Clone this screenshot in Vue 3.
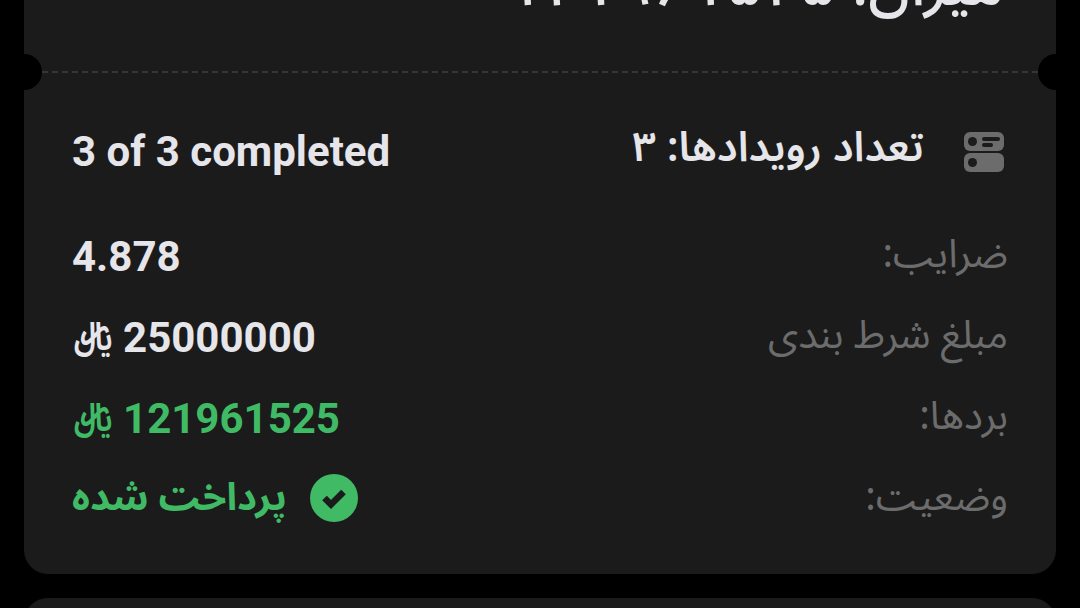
<script setup>
const rows = [
  { label: 'ضرایب:', value: '4.878', tone: '' },
  { label: 'مبلغ شرط بندی', value: '25000000', tone: '', rial: true },
  { label: 'بردها:', value: '121961525', tone: 'green', rial: true },
]
</script>

<template>
  <div class="page" dir="rtl">
    <section class="card">
      <div class="head">
        <div class="title">میزان: <span class="digits">۱۲۱۹۶۱۵۲۵</span></div>
      </div>
      <div class="divider">
        <span class="notch notch-r"></span>
        <span class="dash"></span>
        <span class="notch notch-l"></span>
      </div>
      <div class="body">
        <div class="summary">
          <div class="count">
            <svg class="stack" width="40" height="40" viewBox="0 0 40 40">
              <rect x="0" y="0" width="40" height="19" rx="6" fill="#6c6c6c" />
              <rect x="0" y="21" width="40" height="19" rx="6" fill="#6c6c6c" />
              <circle cx="8.5" cy="9.5" r="4.5" fill="#1b1b1b" />
              <circle cx="8.5" cy="30.5" r="4.5" fill="#1b1b1b" />
              <rect x="18" y="5" width="18" height="4" rx="2" fill="#1b1b1b" />
              <rect x="18" y="11" width="11" height="4" rx="2" fill="#1b1b1b" />
            </svg>
            <span class="count-text">تعداد رویدادها: ۳</span>
          </div>
          <div class="completed" dir="ltr">3 of 3 completed</div>
        </div>
        <div v-for="row in rows" :key="row.label" class="row">
          <span class="label">{{ row.label }}</span>
          <span class="value" :class="row.tone" dir="ltr">
            <span v-if="row.rial" class="rial" dir="rtl">﷼</span>
            <span>{{ row.value }}</span>
          </span>
        </div>
        <div class="row">
          <span class="label">وضعیت:</span>
          <span class="status">
            <svg width="48" height="48" viewBox="0 0 48 48">
              <circle cx="24" cy="24" r="24" fill="#40ba65" />
              <path d="M14.5 24 L21 30.5 L33.5 18" fill="none" stroke="#1b1b1b" stroke-width="6.5" />
            </svg>
            <span>پرداخت شده</span>
          </span>
        </div>
      </div>
    </section>
    <section class="card next"></section>
  </div>
</template>

<style scoped>
.page {
  width: 1080px;
  height: 608px;
  overflow: hidden;
  background: #000;
  padding: 0 24px;
  box-sizing: border-box;
  font-family: "Noto Sans", "Noto Sans Arabic", "DejaVu Sans", sans-serif;
}
.card {
  width: 1032px;
  background: #1b1b1b;
  border-radius: 24px;
}
.card:first-child {
  margin-top: -60px;
  border-top-left-radius: 0;
  border-top-right-radius: 0;
}
.next {
  height: 60px;
  margin-top: 24px;
}
.head {
  height: 132px;
  overflow: hidden;
  padding: 0 52px;
}
.title {
  font-size: 60px;
  line-height: 72px;
  color: #e5e5ea;
  font-weight: 500;
  white-space: nowrap;
  margin-top: 5px;
}
.digits {
  font-size: 64px;
  line-height: 72px;
}
.divider {
  display: flex;
  align-items: center;
  height: 36px;
  margin-top: -18px;
  overflow: hidden;
}
.notch {
  width: 18px;
  height: 36px;
  flex: none;
  background: #000;
}
.notch-r { border-radius: 18px 0 0 18px; }
.notch-l { border-radius: 0 18px 18px 0; }
.dash {
  flex: 1;
  border-top: 2px dashed #363636;
}
.body {
  padding: 38px 48px 0 48px;
  height: 484px;
  box-sizing: border-box;
}
.summary {
  display: flex;
  justify-content: space-between;
  align-items: center;
  height: 48px;
  margin-bottom: 41px;
  padding-right: 4px;
}
.count {
  display: flex;
  align-items: center;
  gap: 40px;
  color: #e5e5ea;
  font-size: 41.6px;
  font-weight: 600;
}
.count-text {
  padding-bottom: 8px;
}
.completed {
  color: #e5e5ea;
  font-family: Roboto, sans-serif;
  font-size: 42px;
  font-weight: 700;
  padding-bottom: 2px;
}
.row {
  display: flex;
  justify-content: space-between;
  align-items: center;
  height: 81px;
}
.label {
  color: #6c6c6c;
  font-size: 39.6px;
  padding-bottom: 6px;
}
.value {
  display: flex;
  align-items: center;
  gap: 14px;
  color: #e5e5ea;
  font-family: Roboto, sans-serif;
  font-size: 42px;
  font-weight: 700;
  padding-bottom: 2px;
}
.value.green, .status { color: #40ba65; }
.rial {
  font-family: "Noto Sans Arabic", "Noto Sans", sans-serif;
  font-size: 38px;
  font-weight: 600;
  transform: scaleX(0.8);
  transform-origin: left center;
  margin-left: 2px;
  margin-right: -13px;
}
.status {
  display: flex;
  align-items: center;
  gap: 23px;
  font-size: 38.4px;
  font-weight: 700;
  padding-bottom: 6px;
}
</style>
